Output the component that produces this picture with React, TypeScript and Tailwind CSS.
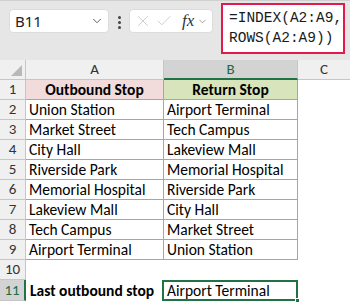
import { ChevronDown, X, Check } from 'lucide-react';

const rows: [string, string][] = [
  ['Union Station', 'Airport Terminal'],
  ['Market Street', 'Tech Campus'],
  ['City Hall', 'Lakeview Mall'],
  ['Riverside Park', 'Memorial Hospital'],
  ['Memorial Hospital', 'Riverside Park'],
  ['Lakeview Mall', 'City Hall'],
  ['Tech Campus', 'Market Street'],
  ['Airport Terminal', 'Union Station'],
];

const cellFont = { fontFamily: 'Carlito, "Liberation Sans", Arial, sans-serif' };

export default function App() {
  return (
    <div className="w-[350px] h-[304px] bg-white overflow-hidden text-[#000]" style={cellFont}>
      {/* barra de fórmulas */}
      <div className="h-[60px] bg-[#e6e6e6] border-t border-[#d0d0d0] flex items-start relative">
        <div className="mt-[8px] ml-[9px] w-[100px] h-[24px] bg-white rounded-[4px] border border-[#dcdcdc] flex items-center justify-between pl-[5px] pr-[4px]">
          <span className="text-[15px] text-[#222]" style={{ fontFamily: '"Noto Sans", sans-serif' }}>B11</span>
          <ChevronDown size={14} strokeWidth={1.6} className="text-[#555]" />
        </div>
        <div className="mt-[15px] ml-[9px] flex flex-col gap-[2px]">
          <span className="w-[3px] h-[3px] bg-[#444] rounded-full" />
          <span className="w-[3px] h-[3px] bg-[#444] rounded-full" />
          <span className="w-[3px] h-[3px] bg-[#444] rounded-full" />
        </div>
        <div className="mt-[8px] ml-[8px] w-[84px] h-[24px] bg-white rounded-[4px] border border-[#dcdcdc] flex items-center pl-[4px] gap-[3px]">
          <X size={18} strokeWidth={1.1} className="text-[#c4c4c4]" />
          <Check size={18} strokeWidth={1.1} className="text-[#c4c4c4]" />
          <span className="ml-[6px] text-[17px] italic text-[#333]" style={{ fontFamily: '"Liberation Serif", serif' }}>fx</span>
          <ChevronDown size={11} strokeWidth={1.5} className="text-[#777]" />
        </div>
        <div className="mt-[2px] ml-[8px] w-[124px] h-[51px] bg-white border-[2px] border-[#e3194b] pl-[6px] pt-[3px] leading-[20px] text-[14.5px] text-[#1a1a1a]" style={{ fontFamily: '"Liberation Mono", monospace' }}>
          <div>=INDEX(A2:A9,</div>
          <div>ROWS(A2:A9))</div>
        </div>
      </div>

      {/* cabecera de columnas */}
      <div className="flex h-[20px] bg-[#f0f0f0] border-b border-[#c6c6c6] text-[15px] text-[#333]">
        <div className="w-[26px] border-r border-[#c6c6c6] relative">
          <div className="absolute right-[3px] bottom-[3px] w-0 h-0 border-l-[11px] border-l-transparent border-b-[11px] border-b-[#b8b8b8]" />
        </div>
        <div className="w-[138px] border-r border-[#c6c6c6] flex items-center justify-center">A</div>
        <div className="w-[134px] bg-[#d3d3d3] border-r border-[#c6c6c6] border-b-[2px] border-b-[#217346] -mb-px flex items-center justify-center text-[#1e6b40]">B</div>
        <div className="flex-1 flex items-center justify-center">C</div>
      </div>

      {/* fila 1 */}
      <div className="flex h-[20px] text-[15.5px]">
        <div className="w-[26px] bg-[#f0f0f0] border-r border-b border-[#c6c6c6] flex items-center justify-center text-[15px] text-[#333]">1</div>
        <div className="w-[138px] bg-[#f2dcdb] border-r border-b border-[#a6a6a6] flex items-center justify-center font-bold">Outbound Stop</div>
        <div className="w-[134px] bg-[#d8e4bc] border-r border-b border-[#a6a6a6] flex items-center justify-center font-bold">Return Stop</div>
        <div className="flex-1" />
      </div>

      {rows.map(([a, b], i) => (
        <div key={i} className="flex h-[20px] text-[15.5px]">
          <div className="w-[26px] bg-[#f0f0f0] border-r border-b border-[#c6c6c6] flex items-center justify-center text-[15px] text-[#333]">{i + 2}</div>
          <div className="w-[138px] border-r border-b border-[#a6a6a6] flex items-center pl-[3px] whitespace-nowrap">{a}</div>
          <div className="w-[134px] border-r border-b border-[#a6a6a6] flex items-center pl-[3px] whitespace-nowrap">{b}</div>
          <div className="flex-1" />
        </div>
      ))}

      {/* fila 10 */}
      <div className="flex h-[20px]">
        <div className="w-[26px] bg-[#f0f0f0] border-r border-b border-[#c6c6c6] flex items-center justify-center text-[15px] text-[#333]">10</div>
        <div className="flex-1" />
      </div>

      {/* fila 11 */}
      <div className="flex h-[21px] text-[15.5px]">
        <div className="w-[26px] bg-[#d3d3d3] border-r-[2px] border-r-[#217346] border-b border-[#c6c6c6] flex items-center justify-center text-[15px] text-[#1e6b40]">11</div>
        <div className="w-[137px] flex items-center pl-[4px] font-bold whitespace-nowrap">Last outbound stop</div>
        <div className="w-[136px] -ml-px border-[2px] border-[#217346] flex items-center pl-[3px] whitespace-nowrap relative">
          Airport Terminal
          <div className="absolute -right-[4px] -bottom-[4px] w-[5px] h-[5px] bg-[#217346] border border-white" />
        </div>
        <div className="flex-1" />
      </div>
    </div>
  );
}
